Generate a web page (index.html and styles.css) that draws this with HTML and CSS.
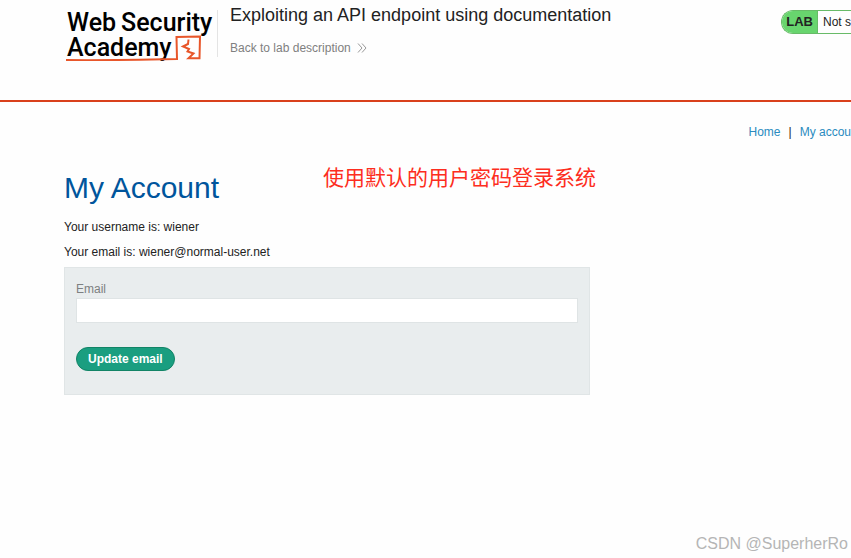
FILE: index.html
```html
<!DOCTYPE html>
<html lang="en">
<head>
<meta charset="utf-8">
<title>Exploiting an API endpoint using documentation</title>
<link rel="stylesheet" href="styles.css">
</head>
<body>
<header class="lab-header">
  <div class="logo">
    <div class="logo-line"><span>Web</span><span>Security</span></div>
    <div class="logo-line">Academy</div>
    <svg class="logo-mark" viewBox="0 0 150 28" aria-hidden="true">
      <path d="M0 25Q40 25.500 111 24L110.500 2L134 1.500L133.500 23.300H122.500L127.500 18.500L121.500 16.500L123 14L117 11.500L122 9L122.500 4.500" />
    </svg>
  </div>
  <div class="lab-title">
    <h2>Exploiting an API endpoint using documentation</h2>
    <a class="back" href="#">Back to lab description
      <svg class="chevrons" viewBox="0 0 10 10" aria-hidden="true"><path d="M1 .5L5 5L1 9.500M5 .5L9 5L5 9.500" /></svg>
    </a>
  </div>
  <div class="status"><strong>LAB</strong><span>Not s</span></div>
</header>
<main>
  <nav><a href="#">Home</a><span>|</span><a href="#">My accou</a></nav>
  <div class="heading-row">
    <h1>My Account</h1>
    <p class="note" lang="zh">使用默认的用户密码登录系统</p>
  </div>
  <p class="detail">Your username is: wiener</p>
  <p class="detail">Your email is: wiener@normal-user.net</p>
  <form>
    <label for="email">Email</label>
    <input id="email" type="email" name="email">
    <button type="button">Update email</button>
  </form>
</main>
<footer>CSDN @SuperherRo</footer>
</body>
</html>
```
FILE: styles.css
```css
* { box-sizing: border-box; }
body {
  margin: 0;
  min-height: 100vh;
  display: flex;
  flex-direction: column;
  overflow-x: hidden;
  background: #fefefe;
  color: #222;
  font: 12px/16px "Liberation Sans", Arial, sans-serif;
}
h1, h2, p { margin: 0; font-weight: 400; }
a { text-decoration: none; }
.lab-header {
  display: flex;
  align-items: flex-start;
  height: 102px;
  padding: 10px 0 0 65px;
  border-bottom: 2px solid #d9401c;
}
.logo {
  position: relative;
  width: 153px;
  height: 47px;
  padding-left: 2px;
  border-right: 1px solid #e4e4e4;
  color: #000;
  font: 500 25px/25px Roboto, sans-serif;
}
.logo-line { display: flex; gap: 5px; }
.logo-mark {
  position: absolute;
  left: 1px;
  top: 25px;
  width: 150px;
  height: 28px;
  fill: none;
  stroke: #e8562a;
  stroke-width: 2;
}
.lab-title { padding-left: 12px; }
h2 { font-size: 18px; line-height: 22px; margin-top: -6px; }
.back { display: flex; align-items: center; gap: 6px; margin-top: 14px; color: #808080; }
.chevrons { width: 10px; height: 10px; fill: none; stroke: #999; }
.status {
  display: flex;
  height: 24px;
  margin-left: auto;
  border: 1px solid #68bb68;
  border-right: 0;
  border-radius: 12px 0 0 12px;
  line-height: 22px;
  overflow: hidden;
}
.status strong { padding: 0 4px; background: #68d56e; border-right: 1px solid #68bb68; font-size: 13px; }
.status span { padding-left: 5px; }
main { padding-left: 64px; }
nav { display: flex; justify-content: flex-end; gap: 8px; padding-top: 22px; }
nav a { color: #2a8bc0; }
.heading-row { display: flex; align-items: flex-start; gap: 104px; margin-top: 24px; }
h1 { color: #00559c; font-size: 30px; line-height: 48px; }
.note { color: #fd2d20; font: 21px/24px "Noto Sans CJK SC", sans-serif; }
.detail { margin-top: 9px; }
.heading-row + .detail { margin-top: 7px; }
form {
  width: 67%;
  max-width: 526px;
  margin-top: 7px;
  padding: 13px 11px 23px;
  background: #e9edee;
  border: 1px solid #e0e5e6;
}
label { display: block; color: #7d8081; }
input { display: block; width: 100%; height: 25px; margin-top: 1px; border: 1px solid #dfe4e5; background: #fff; }
button {
  height: 24px;
  margin-top: 24px;
  padding: 0 11px;
  border: 1px solid #128466;
  border-radius: 12px;
  background: #1a9e80;
  color: #fff;
  font: bold 12px "Liberation Sans", Arial, sans-serif;
}
footer { margin-top: auto; padding: 0 3px 4px; text-align: right; color: #b5b5b5; font-size: 16px; line-height: 20px; }
```
